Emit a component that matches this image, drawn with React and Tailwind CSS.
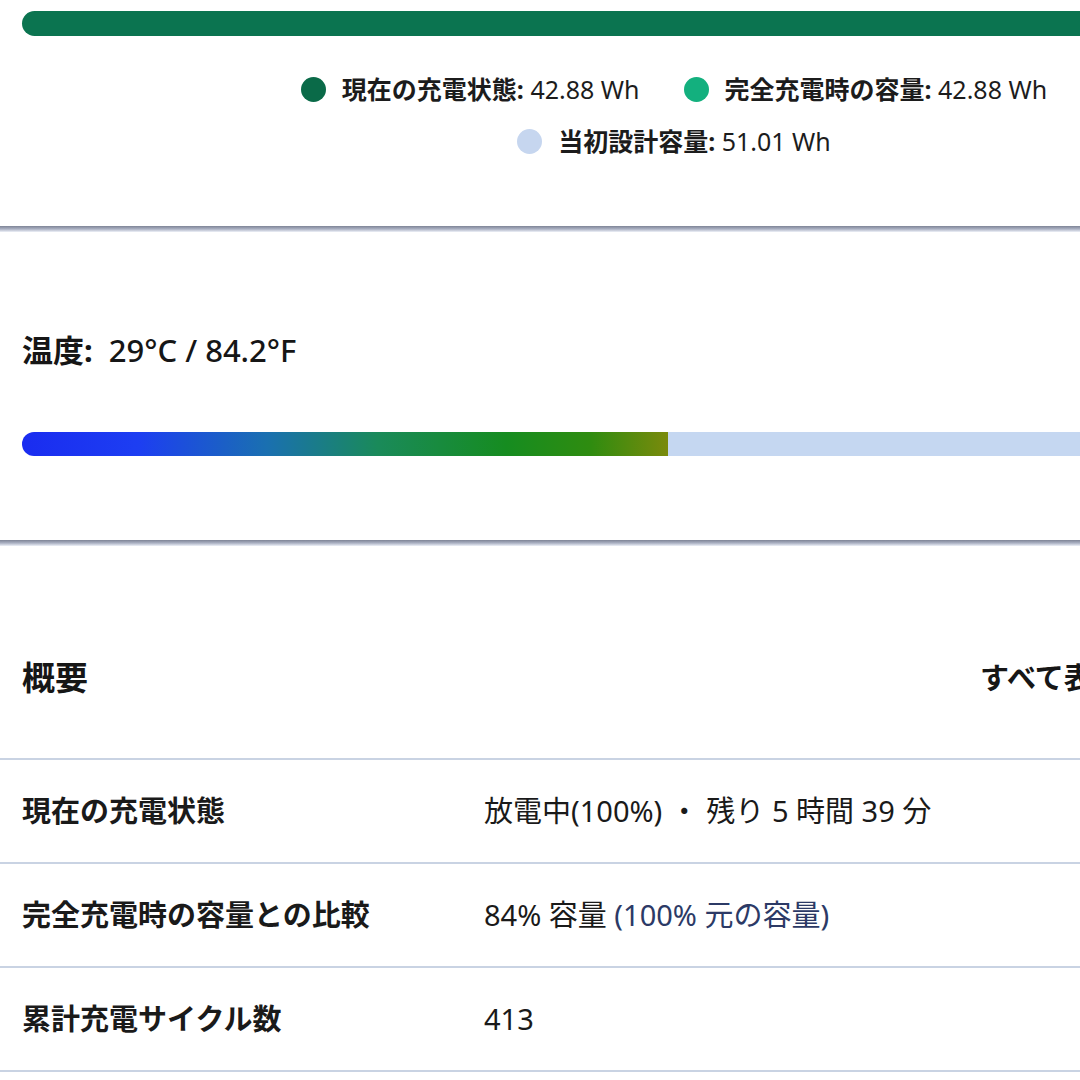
export default function App() {
  const font = { fontFamily: '"Noto Sans", "Noto Sans CJK JP", sans-serif' };
  const Divider = () => (
    <div className="h-[6px] w-full bg-gradient-to-b from-[#7e8496] via-[#aab0c2] to-[#eef1f8]" />
  );
  const Dot = ({ c }) => <span className={`inline-block w-[25px] h-[25px] rounded-full ${c}`} />;
  const Row = ({ label, children }) => (
    <div className="flex items-center h-[104px] border-b-2 border-[#c9d3e3]">
      <div className="w-[484px] pl-[22px] text-[29px] font-bold text-[#1a1a1a]">{label}</div>
      <div className="text-[29px] text-[#1a1a1a]">{children}</div>
    </div>
  );
  return (
    <div className="w-[1080px] h-[1080px] overflow-hidden bg-white" style={font}>
      <div className="h-[226px] pt-[11px]">
        <div className="ml-[22px] w-[1100px] h-[25px] rounded-l-full bg-[#0b7450]" />
        <div className="w-[1348px] flex flex-col items-center mt-[36px] gap-[18px] text-[25px] text-[#1c1c1c] leading-[34px]">
          <div className="flex items-center gap-[44px]">
            <div className="flex items-center gap-[16px]">
              <Dot c="bg-[#0a6a48]" />
              <span><span className="font-bold">現在の充電状態:</span> 42.88 Wh</span>
            </div>
            <div className="flex items-center gap-[16px]">
              <Dot c="bg-[#13b07e]" />
              <span><span className="font-bold">完全充電時の容量:</span> 42.88 Wh</span>
            </div>
          </div>
          <div className="flex items-center gap-[16px]">
            <Dot c="bg-[#c6d6ef]" />
            <span><span className="font-bold">当初設計容量:</span> 51.01 Wh</span>
          </div>
        </div>
      </div>
      <Divider />
      <div className="h-[308px] flex flex-col">
        <div className="pl-[22px] mt-[100px] text-[31px] text-[#161616] leading-[36px]">
          <span className="font-bold">温度:</span>
          <span className="ml-[16px] font-medium">29°C / 84.2°F</span>
        </div>
        <div className="mt-[64px] ml-[22px] flex h-[24px]">
          <div className="w-[646px] rounded-l-full bg-[linear-gradient(to_right,#1a2cf0_0%,#1d3ef2_18%,#1a70b0_38%,#1a8a5a_55%,#168c20_75%,#2f8c10_88%,#7a8a0c_100%)]" />
          <div className="flex-1 bg-[#c5d7f1]" />
        </div>
      </div>
      <Divider />
      <div className="flex flex-col">
        <div className="h-[214px] pt-[110px] border-b-2 border-[#c9d3e3] relative">
          <div className="pl-[22px] text-[33px] font-bold text-[#161616] leading-[44px]">概要</div>
          <div className="absolute top-[110px] left-[980px] text-[29px] font-bold text-[#161616] leading-[44px] whitespace-nowrap">すべて表示</div>
        </div>
        <Row label="現在の充電状態">放電中(100%) ・ 残り 5 時間 39 分</Row>
        <Row label="完全充電時の容量との比較">
          84% 容量 <span className="text-[#2c3a66]">(100% 元の容量)</span>
        </Row>
        <Row label="累計充電サイクル数">413</Row>
      </div>
    </div>
  );
}
